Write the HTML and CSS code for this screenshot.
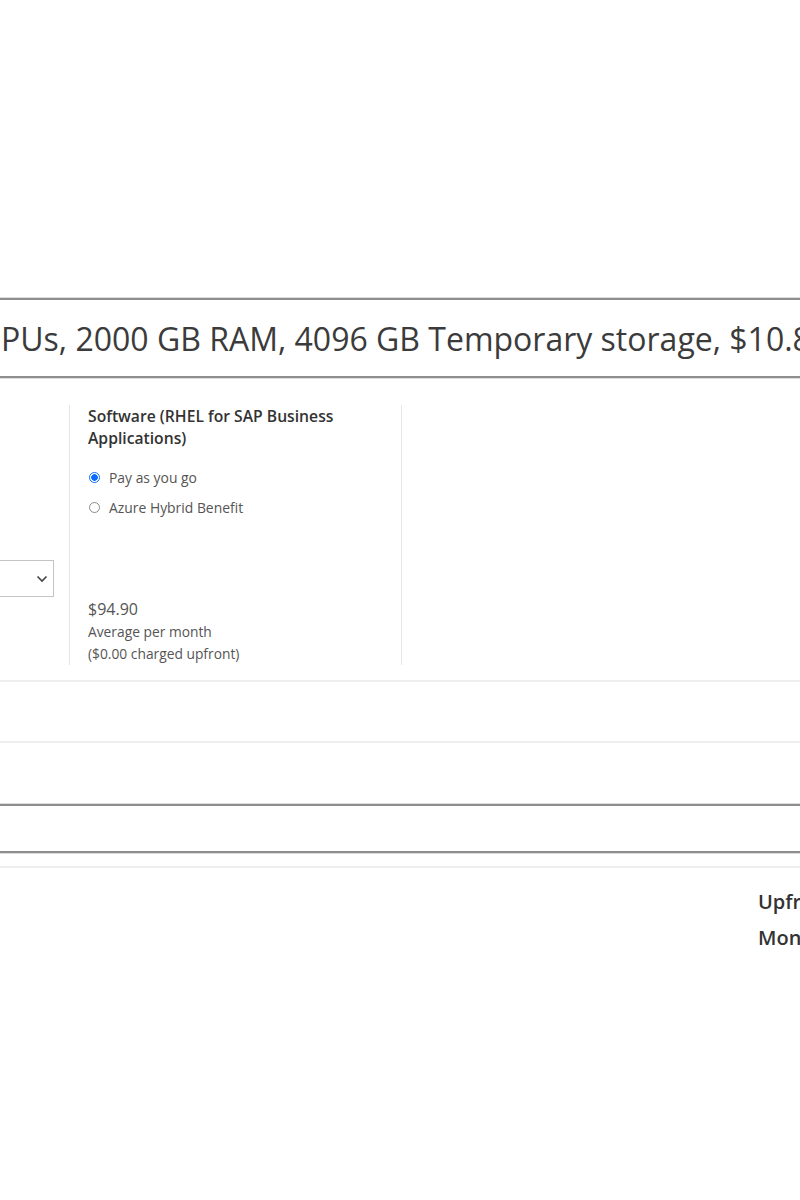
FILE: index.html
```html
<!DOCTYPE html>
<html>
<head>
<meta charset="utf-8">
<link rel="stylesheet" href="styles.css">
</head>
<body>
<div class="page">
  <div class="summary"><span class="summary-text">PUs, 2000 GB RAM, 4096 GB Temporary storage, $10.8</span></div>
  <div class="config">
    <div class="col-left">
      <div class="select"><span class="chev"><svg width="12" height="8" viewBox="0 0 12 8"><path d="M1.5 1.5 L6 6 L10.5 1.5" fill="none" stroke="#444" stroke-width="1.6"/></svg></span></div>
    </div>
    <div class="col-soft">
      <div class="soft-title">Software (RHEL for SAP Business Applications)</div>
      <div class="radios">
        <label class="radio"><span class="dot on"></span><span>Pay as you go</span></label>
        <label class="radio"><span class="dot"></span><span>Azure Hybrid Benefit</span></label>
      </div>
      <div class="price">
        <div class="amount">$94.90</div>
        <div class="note">Average per month</div>
        <div class="note">($0.00 charged upfront)</div>
      </div>
    </div>
    <div class="col-rest"></div>
  </div>
  <div class="row row-a"></div>
  <div class="row row-b"></div>
  <div class="box-dark"></div>
  <div class="totals">
    <div class="total-line">Upfront cost</div>
    <div class="total-line">Monthly cost</div>
  </div>
</div>
</body>
</html>
```
FILE: styles.css
```css
html, body {
  margin: 0;
  padding: 0;
  background: #ffffff;
}
.page {
  width: 800px;
  overflow: hidden;
  font-family: "Open Sans", "Noto Sans", sans-serif;
  color: #323130;
  padding-top: 298px;
}
.summary {
  height: 76px;
  border-top: 2px solid #8e8e8e;
  border-bottom: 2px solid #8e8e8e;
  box-shadow: 0 1px 0 #dcdcdc, 0 -1px 0 #dcdcdc;
  display: flex;
  align-items: center;
  white-space: nowrap;
  overflow: hidden;
}
.summary-text {
  font-size: 32px;
  color: #3b3b3b;
  padding-left: 1px;
  letter-spacing: 0;
}
.config {
  display: flex;
  margin-top: 27px;
  height: 260px;
}
.col-left {
  width: 70px;
  border-right: 1px solid #e6e6e6;
  box-sizing: border-box;
}
.select {
  margin-top: 155px;
  margin-left: -10px;
  width: 64px;
  height: 37px;
  border: 1px solid #c4c4c4;
  box-sizing: border-box;
  display: flex;
  align-items: center;
  justify-content: flex-end;
  padding-right: 5px;
}
.chev { display: flex; }
.col-soft {
  width: 332px;
  border-right: 1px solid #e6e6e6;
  box-sizing: border-box;
  padding-left: 18px;
  display: flex;
  flex-direction: column;
}
.soft-title {
  font-size: 15.7px;
  font-weight: 600;
  line-height: 22px;
  width: 280px;
  color: #333;
}
.radios {
  margin-top: 17px;
  display: flex;
  flex-direction: column;
  gap: 8px;
}
.radio {
  display: flex;
  align-items: center;
  height: 22px;
  font-size: 13.9px;
  color: #555;
}
.dot {
  width: 11px;
  height: 11px;
  border: 1px solid #8a8a8a;
  border-radius: 50%;
  margin-left: 1px;
  margin-right: 9px;
  box-sizing: border-box;
}
.dot.on {
  border-color: #0a6cff;
  background: radial-gradient(circle, #0a6cff 0 3px, #fff 3.6px);
}
.price {
  margin-top: auto;
}
.amount {
  font-size: 16px;
  line-height: 24px;
  color: #555;
}
.note {
  font-size: 13.8px;
  line-height: 22px;
  color: #555;
}
.col-rest { flex: 1; }
.row {
  border-top: 2px solid #eeeeee;
}
.row-a { margin-top: 15px; height: 59px; }
.row-b { height: 61px; }
.box-dark {
  height: 45px;
  border-top: 2px solid #8e8e8e;
  border-bottom: 2px solid #8e8e8e;
  box-shadow: 0 1px 0 #dcdcdc, 0 -1px 0 #dcdcdc;
}
.totals {
  margin-top: 13px;
  border-top: 2px solid #efefef;
  padding-left: 758px;
  padding-top: 16px;
  white-space: nowrap;
}
.total-line {
  font-size: 20px;
  font-weight: 600;
  line-height: 36px;
  color: #333;
}
```
